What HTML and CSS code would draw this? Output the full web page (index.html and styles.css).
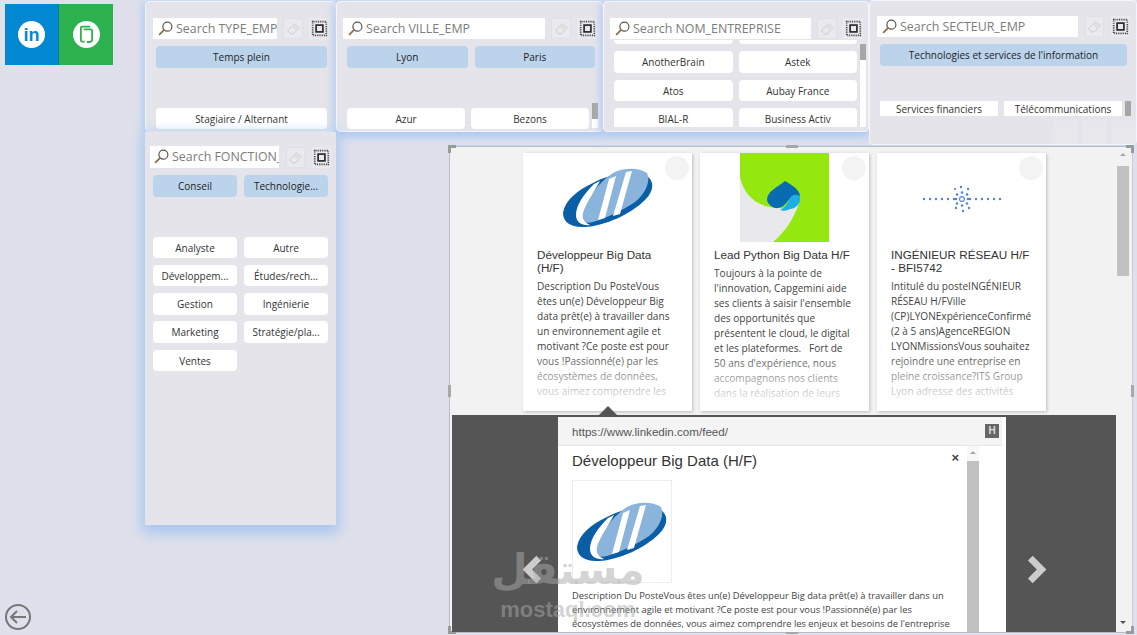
FILE: index.html
```html
<!DOCTYPE html>
<html lang="fr">
<head>
<meta charset="utf-8">
<title>Offres d'emploi</title>
<link rel="stylesheet" href="styles.css">
</head>
<body>
<svg class="defs" aria-hidden="true">
  <symbol id="mag" viewBox="0 0 16 16"><circle cx="10" cy="6" r="4.8" fill="none" stroke="#5e5850" stroke-width="1.3"/><path d="M6.5 9.5 1.2 14.8" stroke="#8a6a48" stroke-width="1.8" fill="none"/></symbol>
  <symbol id="eraser" viewBox="0 0 20 20"><path d="M3 12.5 11 4.5l6 4.500-7.500 7.500H7z" fill="#e9e9ee" stroke="#c9c9c9" stroke-width="1.1"/><path d="M11 4.500l6 4.500-3.600 3.600-6-4.500z" fill="#e0e0e0"/></symbol>
  <symbol id="focus" viewBox="0 0 20 20"><rect x="2" y="2" width="16" height="16" fill="none" stroke="#444" stroke-width="2" stroke-dasharray="1.100 1"/><rect x="6" y="6" width="8" height="8" fill="none" stroke="#2a2a2a" stroke-width="2"/></symbol>
  <symbol id="sii" viewBox="0 0 90 60">
    <path d="M0 45C2 32 15 22 28 16 45 6 70 2 80 6 92 11 92 22 82 32 68 46 42 58 22 59 8 60 0 54 0 45z" fill="#0a5ea6"/>
    <path d="M16 48C24 30 36 14 50 5 62-1 76 0 84 5 88 14 82 26 72 34 60 42 44 50 30 54 22 56 16 54 16 48z" fill="#8ab4dc"/>
    <path d="M31 16C21 26 13 37 13 47 13 55 20 58 27 57 20 54 18 49 21 42 25 32 31 24 37 13z" fill="#fff"/>
    <path d="M46 11 53 8 42 50 35 52zM63 4 69 3 57 46 50 48z" fill="#fff"/>
  </symbol>
</svg>

<main class="canvas">
  <nav class="social">
    <div class="social-tile tile-in"><span class="social-disc">in</span></div>
    <div class="social-tile tile-job"><span class="social-disc"><svg class="job-glyph" viewBox="0 0 16 20"><path d="M12 1.500H3.500A1.500 1.500 0 0 0 2 3v13a1.500 1.500 0 0 0 1.500 1.500H6M14 5v10a3 3 0 0 1-3 3H8.500M5 4.500h9" fill="none" stroke="#2bb24f" stroke-width="1.900"/></svg></span></div>
  </nav>

  <section class="slicer s-type">
    <div class="search-row">
      <div class="search"><svg class="mag"><use href="#mag"/></svg><span class="search-text">Search TYPE_EMP</span></div>
      <span class="tool tool-erase"><svg class="tool-icon"><use href="#eraser"/></svg></span>
      <span class="tool"><svg class="tool-icon"><use href="#focus"/></svg></span>
    </div>
    <div class="chips one"><span class="chip on">Temps plein</span></div>
    <div class="chips one rest"><span class="chip">Stagiaire / Alternant</span></div>
  </section>

  <section class="slicer s-ville">
    <div class="search-row">
      <div class="search"><svg class="mag"><use href="#mag"/></svg><span class="search-text">Search VILLE_EMP</span></div>
      <span class="tool tool-erase"><svg class="tool-icon"><use href="#eraser"/></svg></span>
      <span class="tool"><svg class="tool-icon"><use href="#focus"/></svg></span>
    </div>
    <div class="chips two"><span class="chip on">Lyon</span><span class="chip on">Paris</span></div>
    <div class="scroll-list rest">
      <div class="chips two narrow"><span class="chip">Azur</span><span class="chip">Bezons</span></div>
      <div class="mini-scroll"><i class="mini-thumb"></i></div>
    </div>
  </section>

  <section class="slicer s-nom">
    <div class="search-row">
      <div class="search"><svg class="mag"><use href="#mag"/></svg><span class="search-text">Search NOM_ENTREPRISE</span></div>
      <span class="tool tool-erase"><svg class="tool-icon"><use href="#eraser"/></svg></span>
      <span class="tool"><svg class="tool-icon"><use href="#focus"/></svg></span>
    </div>
    <div class="scroll-list nom-list">
      <div class="nom-clip">
        <div class="chips two nom-chips">
          <span class="chip"></span><span class="chip"></span>
          <span class="chip">AnotherBrain</span><span class="chip">Astek</span>
          <span class="chip">Atos</span><span class="chip">Aubay France</span>
          <span class="chip">BIAL-R</span><span class="chip">Business Activ</span>
        </div>
      </div>
      <div class="mini-scroll"><i class="mini-thumb"></i></div>
    </div>
  </section>

  <section class="slicer s-fonction">
    <div class="search-row">
      <div class="search"><svg class="mag"><use href="#mag"/></svg><span class="search-text">Search FONCTION_EMP</span></div>
      <span class="tool tool-erase"><svg class="tool-icon"><use href="#eraser"/></svg></span>
      <span class="tool"><svg class="tool-icon"><use href="#focus"/></svg></span>
    </div>
    <div class="chips two"><span class="chip on">Conseil</span><span class="chip on">Technologie...</span></div>
    <div class="chips two fn-rest">
      <span class="chip">Analyste</span><span class="chip">Autre</span>
      <span class="chip">Développem...</span><span class="chip">Études/rech...</span>
      <span class="chip">Gestion</span><span class="chip">Ingénierie</span>
      <span class="chip">Marketing</span><span class="chip">Stratégie/pla...</span>
      <span class="chip">Ventes</span>
    </div>
  </section>

  <section class="slicer s-secteur">
    <div class="search-row">
      <div class="search"><svg class="mag"><use href="#mag"/></svg><span class="search-text">Search SECTEUR_EMP</span></div>
      <span class="tool tool-erase"><svg class="tool-icon"><use href="#eraser"/></svg></span>
      <span class="tool"><svg class="tool-icon"><use href="#focus"/></svg></span>
    </div>
    <div class="chips one"><span class="chip on">Technologies et services de l'information</span></div>
    <div class="scroll-list sect-list">
      <div class="chips two sect-chips"><span class="chip">Services financiers</span><span class="chip">Télécommunications</span></div>
      <div class="mini-scroll"><i class="mini-thumb"></i></div>
    </div>
    <div class="ghosts"><i class="ghost"></i><i class="ghost"></i><i class="ghost"></i></div>
  </section>

  <section class="report">
    <i class="handle h-tl"></i><i class="handle h-tr"></i><i class="handle h-bl"></i><i class="handle h-br"></i>
    <i class="grip g-top"></i><i class="grip g-left"></i><i class="grip g-right"></i><i class="grip g-bottom"></i>
    <div class="report-main">
      <div class="cards">
        <article class="card">
          <div class="card-media"><svg class="sii-big"><use href="#sii"/></svg></div>
          <i class="card-dot"></i>
          <h2 class="card-title">Développeur Big Data<br>(H/F)</h2>
          <p class="card-body">Description Du PosteVous<br>êtes un(e) Développeur Big<br>data prêt(e) à travailler dans<br>un environnement agile et<br>motivant ?Ce poste est pour<br>vous !Passionné(e) par les<br>écosystèmes de données,<br>vous aimez comprendre les</p>
        </article>
        <article class="card">
          <div class="card-media">
            <svg class="cap" viewBox="0 0 89 89"><rect width="89" height="89" fill="#95e80f"/><path d="M0 24C4 44 20 55 38 55 46 56 54 54 59 50 54 66 44 80 33 89H0z" fill="#e9e9ec"/><path d="M45 28C38 34 27 38 27 47 28 52 34 56 38 55 46 54 48 46 53 43 56 42 59 43 60 43 60 37 52 32 45 28z" fill="#0a6cb0"/><path d="M50 45C53 41 58 41 60 44 61 50 56 56 50 56 47 58 43 58 40 57 45 55 48 50 50 45z" fill="#1caee6"/></svg></div>
          <i class="card-dot"></i>
          <h2 class="card-title">Lead Python Big Data H/F</h2>
          <p class="card-body">Toujours à la pointe de<br>l'innovation, Capgemini aide<br>ses clients à saisir l'ensemble<br>des opportunités que<br>présentent le cloud, le digital<br>et les plateformes. &nbsp; Fort de<br>50 ans d'expérience, nous<br>accompagnons nos clients<br>dans la réalisation de leurs</p>
        </article>
        <article class="card">
          <div class="card-media">
            <svg class="its" viewBox="0 0 80 30" fill="#4f86d8"><g class="its-line"><circle cx="2" cy="15" r="1.200"/><circle cx="8" cy="15" r="1.200"/><circle cx="14" cy="15" r="1.200"/><circle cx="20" cy="15" r="1.200"/><circle cx="26" cy="15" r="1.200"/><circle cx="32" cy="15" r="1.200"/><circle cx="48" cy="15" r="1.200"/><circle cx="54" cy="15" r="1.200"/><circle cx="60" cy="15" r="1.200"/><circle cx="66" cy="15" r="1.200"/><circle cx="72" cy="15" r="1.200"/><circle cx="78" cy="15" r="1.200"/></g><circle cx="40" cy="15" r="2.400" fill="none" stroke="#4f86d8" stroke-width="1.100"/><circle cx="40" cy="8.500" r="1.300"/><circle cx="40" cy="21.500" r="1.300"/><circle cx="35" cy="10.500" r="1.300"/><circle cx="45" cy="10.500" r="1.300"/><circle cx="35" cy="19.500" r="1.300"/><circle cx="45" cy="19.500" r="1.300"/><circle cx="34" cy="15" r="1.300"/><circle cx="46" cy="15" r="1.300"/><circle cx="39" cy="3" r="1.200"/><circle cx="46" cy="5" r="1.200"/><circle cx="33" cy="5" r="1.100"/><circle cx="41" cy="27" r="1.200"/><circle cx="34" cy="24" r="1.200"/><circle cx="47" cy="24" r="1.200"/></svg></div>
          <i class="card-dot"></i>
          <h2 class="card-title">INGÉNIEUR RÉSEAU H/F<br>- BFI5742</h2>
          <p class="card-body">Intitulé du posteINGÉNIEUR<br>RÉSEAU H/FVille<br>(CP)LYONExpérienceConfirmé<br>(2 à 5 ans)AgenceREGION<br>LYONMissionsVous souhaitez<br>rejoindre une entreprise en<br>pleine croissance?ITS Group<br>Lyon adresse des activités</p>
        </article>
      </div>
      <div class="stage">
        <div class="nav nav-prev"><svg class="chev" viewBox="0 0 20 28"><path d="M16 3 5 14l11 11" fill="none" stroke="#ccc" stroke-width="6.500"/></svg></div>
        <div class="modal">
          <header class="modal-head">
            <span class="modal-url">https://www.linkedin.com/feed/</span>
            <span class="modal-h">H</span>
          </header>
          <div class="modal-wrap">
            <div class="modal-content">
              <span class="modal-x">×</span>
              <h1 class="modal-title">Développeur Big Data (H/F)</h1>
              <div class="modal-logo"><svg class="sii-big"><use href="#sii"/></svg></div>
              <p class="modal-text">Description Du PosteVous êtes un(e) Développeur Big data prêt(e) à travailler dans un<br>environnement agile et motivant ?Ce poste est pour vous !Passionné(e) par les<br>écosystèmes de données, vous aimez comprendre les enjeux et besoins de l'entreprise</p>
            </div>
            <div class="modal-scroll"><i class="arrow-up"></i><i class="modal-thumb"></i></div>
          </div>
        </div>
        <div class="nav nav-next"><svg class="chev" viewBox="0 0 20 28"><path d="M4 3l11 11L4 25" fill="none" stroke="#ccc" stroke-width="6.500"/></svg></div>
      </div>
    </div>
    <div class="report-scroll"><i class="arrow-up"></i><i class="report-thumb"></i><i class="arrow-down"></i></div>
  </section>

  <div class="watermark"><span class="wm-ar" lang="ar" dir="rtl">مستقل</span><span class="wm-en">mostaql.com</span></div>

  <svg class="back" viewBox="0 0 28 28"><circle cx="14" cy="14" r="12" fill="none" stroke="#777" stroke-width="2"/><path d="M22 14H7M13 8l-6 6 6 6" fill="none" stroke="#777" stroke-width="2"/></svg>
</main>
</body>
</html>
```
FILE: styles.css
```css
* { box-sizing: border-box; }
html, body { margin: 0; padding: 0; }
body { font-family: "Open Sans", "Liberation Sans", sans-serif; background: #dfe0eb; color: #333; }
.defs { position: absolute; width: 0; height: 0; }
.canvas { position: relative; width: 1137px; height: 635px; overflow: hidden; background: #dfe0eb; }

/* tiles */
.social { position: absolute; left: 5px; top: 4px; display: flex; height: 61px; }
.social-tile { width: 54px; display: flex; align-items: center; justify-content: center; }
.tile-in { background: #0288d2; color: #0288d2; border-right: 1px dotted #0d6a7a; }
.tile-job { background: #2bb24f; }
.social-disc { width: 27px; height: 27px; border-radius: 50%; background: #fff; display: flex; align-items: center; justify-content: center; font: bold 18px/1 "Liberation Sans", sans-serif; }
.job-glyph { width: 15px; height: 19px; }

/* slicers */
.slicer { position: absolute; display: flex; flex-direction: column; background: #e4e4ea; border: 1px solid #f3f5fc; border-radius: 4px; overflow: hidden; box-shadow: 0 3px 9px 2px #a9c9f2; }
.s-type { left: 145px; top: 1px; width: 191px; height: 131px; padding: 16px 6px 0 7px; }
.s-ville { left: 336px; top: 1px; width: 267px; height: 131px; padding: 16px 5px 0 6px; }
.s-nom { left: 603px; top: 1px; width: 266px; height: 131px; padding: 16px 5px 0 6px; }
.s-fonction { left: 145px; top: 132px; width: 191px; height: 393px; padding: 14px 6px 0 5px; border: 0; border-radius: 0; box-shadow: 0 5px 13px 3px #a4c6f2; }
.s-secteur { left: 869px; top: 0; width: 268px; height: 145px; padding: 15px 7px 0 7px; box-shadow: none; z-index: 2; }

.search-row { display: flex; align-items: center; height: 21px; flex: none; }
.s-fonction .search-row { height: 22px; }
.search { flex: 1; min-width: 0; height: 100%; display: flex; align-items: center; gap: 3px; padding-left: 5px; background: #fff; overflow: hidden; white-space: nowrap; }
.s-fonction .search { padding-bottom: 1px; padding-left: 4px; }
.mag { width: 15px; height: 15px; flex: none; }
.search-text { font-size: 12.4px; color: #7c7c7c; overflow: hidden; }
.tool { flex: none; width: 20px; height: 21px; margin-left: 6px; background: #e9e9ee; display: flex; align-items: center; justify-content: center; }
.tool-erase { border: 1px solid #e0e0e5; }
.tool-icon { width: 17px; height: 17px; }

.chips { display: grid; gap: 7px; }
.one { grid-template-columns: 1fr; }
.two { grid-template-columns: 1fr 1fr; }
.chip { height: 21.5px; border-radius: 4px; background: #fff; font-size: 10px; line-height: 22.5px; text-align: center; color: #333; white-space: nowrap; overflow: hidden; }
.chip.on { background: #bbd4ec; color: #222; }

.s-type .chips { margin: 7px 2px 0 3px; }
.s-type .rest { margin-top: 40px; }
.s-ville > .chips { margin: 7px 2px 0 4px; }

.rest { flex: 1; min-height: 0; }
.scroll-list { display: flex; align-items: flex-start; min-height: 0; }
.s-ville .scroll-list { margin: 40px 0 0 4px; height: 20px; flex: none; }
.s-ville .narrow { width: 242px; flex: none; column-gap: 6px; }
.mini-scroll { flex: none; width: 6px; height: 100%; margin-left: 3px; background: #fff; }
.mini-thumb { display: block; height: 16px; background: #a6a6a6; }
.s-ville .mini-scroll { margin-top: -5px; height: 25px; }

.nom-list { margin: 1px 0 0 4px; height: 87px; flex: none; }
.nom-clip { width: 243px; height: 87px; overflow: hidden; flex: none; }
.nom-chips { margin-top: -17.5px; column-gap: 6px; row-gap: 7px; }
.s-nom .mini-scroll { margin-left: 3px; margin-top: 4px; height: 83px; }

.s-secteur > .chips { margin: 7px 2px 0 3px; }
.s-secteur .tool { width: 19px; margin-left: 7px; }
.s-secteur .search-row .search { flex: none; width: 201px; }
.sect-list { margin: 35px 0 0 3px; height: 15px; flex: none; }
.sect-chips { width: 242px; flex: none; column-gap: 6px; overflow: hidden; height: 15px; }
.sect-chips .chip { border-radius: 0; line-height: 17px; height: 15px; }
.s-secteur .mini-scroll { margin-left: 3px; height: 15px; }
.s-secteur .mini-thumb { height: 15px; }
.ghosts { display: flex; justify-content: flex-end; gap: 4px; margin: 5px -7px 0 0; flex: none; }
.ghost { width: 25px; height: 25px; background: #e7e7ec; }

.s-fonction > .chips { margin: 7px 0 0 3px; }
.s-fonction .two { column-gap: 7px; grid-template-columns: 84px 84px; }
.s-fonction .fn-rest { margin-top: 40px; row-gap: 6.8px; }
.s-fonction .search-row .search { flex: none; width: 129px; }
.s-fonction .search-row .tool { width: 19px; margin-left: 7px; }

/* report */
.report { position: absolute; left: 449px; top: 146px; width: 684px; height: 487px; display: flex; background: #f2f2f2; border: 1px solid #b9bcc4; border-right-color: #c9cdd6; padding: 1px 3px 0 2px; box-shadow: 0 -1px 0 #c8d8f2; }
.report-main { flex: 1; min-width: 0; display: flex; flex-direction: column; }
.cards { display: flex; gap: 8px; padding: 5px 0 0 71px; height: 267px; flex: none; }
.card { position: relative; width: 169px; height: 258px; padding: 0 12px 11px 14px; background: #fff; box-shadow: 1px 1px 3px rgba(0,0,0,.22); display: flex; flex-direction: column; }
.card-media { height: 90px; margin: 0 -12px 5px -14px; display: flex; justify-content: center; align-items: flex-start; flex: none; }
.card-dot { position: absolute; right: 3px; top: 3px; width: 24px; height: 24px; border-radius: 50%; background: #f3f3f3; }
.sii-big { width: 90px; height: 60px; }
.card .sii-big { margin-top: 15px; }
.cap { width: 89px; height: 89px; }
.its { width: 80px; height: 30px; margin-top: 31px; }
.card-title { margin: 0 0 5px; font: normal 11.7px/13px "Liberation Sans", Arial, sans-serif; color: #333; flex: none; }
.card-body { position: relative; margin: 0; flex: 1; min-height: 0; overflow: hidden; font-size: 10.1px; line-height: 15px; color: #444; white-space: nowrap; }
.card-body::after { content: ""; position: absolute; left: 0; right: 0; bottom: 0; height: 50px; background: linear-gradient(rgba(255,255,255,0), rgba(255,255,255,.85)); }

.stage { position: relative; flex: 1; min-height: 0; display: flex; background: #555; }
.stage::before { content: ""; position: absolute; left: 147px; top: -9px; border: 9px solid transparent; border-top: 0; border-bottom-color: #555; }
.nav { display: flex; padding-top: 140px; }
.nav-prev { width: 106px; justify-content: flex-end; padding-right: 15px; }
.nav-next { flex: 1; padding-left: 20px; }
.chev { width: 21px; height: 29px; }
.modal { width: 448px; margin-top: 2px; background: #fff; display: flex; flex-direction: column; overflow: hidden; }
.modal-head { height: 29px; margin-right: 4px; padding: 0 3px 0 14px; background: #f4f4f4; border-bottom: 1px solid #e8e8e8; display: flex; align-items: center; justify-content: space-between; flex: none; }
.modal-url { font: 11.6px "Liberation Sans", Arial, sans-serif; color: #555; }
.modal-h { width: 14px; height: 14px; background: #666; color: #ddd; font: bold 10px/14px "Liberation Sans", Arial, sans-serif; text-align: center; }
.modal-wrap { flex: 1; min-height: 0; display: flex; }
.modal-content { position: relative; width: 409px; padding: 5px 0 0 14px; flex: none; overflow: hidden; }
.modal-x { position: absolute; right: 8px; top: 4px; font: bold 13px/16px "Liberation Sans", Arial, sans-serif; color: #444; }
.modal-title { margin: 0 0 9px; font: normal 15px/20px "Liberation Sans", Arial, sans-serif; color: #333; }
.modal-logo { width: 100px; height: 103px; border: 1px solid #eee; display: flex; align-items: center; justify-content: center; }
.modal-text { margin: 6px 0 0; font-size: 9.35px; line-height: 14px; color: #444; white-space: nowrap; }
.modal-scroll { width: 12px; flex: none; position: relative; padding-top: 15px; background: #f8f8f8; }
.modal-thumb { display: block; height: 100%; background: #c1c1c1; }
.arrow-up { position: absolute; left: 50%; top: 5px; margin-left: -3px; border: 3px solid transparent; border-top: 0; border-bottom: 3px solid #a6a6a6; }
.arrow-down { position: absolute; left: 50%; bottom: 8px; margin-left: -3px; border: 3px solid transparent; border-bottom: 0; border-top: 3px solid #555; }

.report-scroll { position: relative; width: 12px; flex: none; margin-left: 1px; padding-top: 18px; }
.report-thumb { display: block; height: 110px; background: #c1c1c1; }

.handle { position: absolute; width: 8px; height: 8px; border: 0 solid #9a9a9a; }
.h-tl { left: -2px; top: -2px; border-width: 3px 0 0 3px; }
.h-tr { right: -2px; top: -2px; border-width: 3px 3px 0 0; }
.h-bl { left: -2px; bottom: -2px; border-width: 0 0 3px 3px; }
.h-br { right: -2px; bottom: -2px; border-width: 0 3px 3px 0; }
.grip { position: absolute; background: #a8a8a8; }
.g-top { left: 336px; top: -2px; width: 12px; height: 3px; }
.g-bottom { left: 336px; bottom: -2px; width: 12px; height: 3px; }
.g-left { left: -2px; top: 238px; width: 3px; height: 12px; }
.g-right { right: -2px; top: 238px; width: 3px; height: 12px; }

.watermark { position: absolute; left: 498px; top: 542px; width: 140px; display: flex; flex-direction: column; align-items: center; color: rgba(170,170,170,.5); pointer-events: none; }
.wm-ar { font: bold 42px/56px "DejaVu Sans", sans-serif; }
.wm-en { font: bold 22px/24px "Liberation Sans", sans-serif; }
.back { position: absolute; left: 4px; top: 603px; width: 28px; height: 28px; }
```
